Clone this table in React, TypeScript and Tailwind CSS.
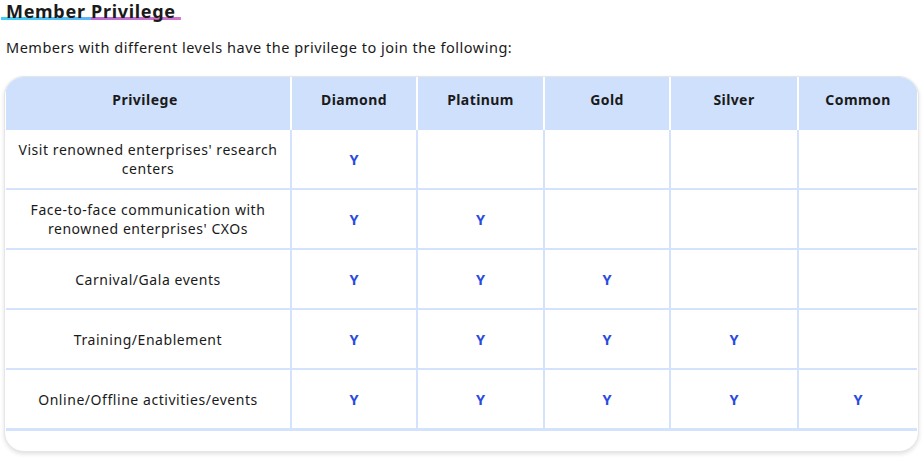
const levels = ["Diamond", "Platinum", "Gold", "Silver", "Common"];

const rows = [
  { name: "Visit renowned enterprises' research centers", count: 1 },
  { name: "Face-to-face communication with renowned enterprises' CXOs", count: 2 },
  { name: "Carnival/Gala events", count: 3 },
  { name: "Training/Enablement", count: 4 },
  { name: "Online/Offline activities/events", count: 5 },
];

const cols = "grid grid-cols-[284px_124px_125px_124px_126px_1fr] gap-x-[2px]";

export default function App() {
  return (
    <div className="min-h-screen bg-white pl-[4px] pr-[5px] text-[#1a1a1a]" style={{ fontFamily: '"Noto Sans", "Open Sans", sans-serif' }}>
      <h2 className="ml-[-3px] inline-block bg-[linear-gradient(90deg,#3fcff4_0%,#5cb6f8_50%,#b86ad4_50%,#cf74cb_100%)] bg-[length:100%_3px] bg-bottom bg-no-repeat px-[5px] text-[18px] font-bold leading-[17px] tracking-[0.7px]">
        Member Privilege
      </h2>

      <p className="mt-[14px] pl-[2px] text-[14.5px] leading-[18px] tracking-[0.5px]">
        Members with different levels have the privilege to join the following:
      </p>

      <div className="mt-[20px] overflow-hidden rounded-[20px] border border-[#e6e6e6] bg-white pb-[20px] pl-[1px] pr-[1px] shadow-[0_2px_4px_rgba(0,0,0,0.12)]">
        <div className={`${cols} bg-white`}>
          <div className="flex h-[53px] items-start justify-center bg-[#cfe0fd] pr-[6px] pt-[12px] text-[14px] font-bold tracking-[0.5px]">Privilege</div>
          {levels.map((l) => (
            <div key={l} className="flex h-[53px] items-start justify-center bg-[#cfe0fd] pt-[12px] text-[14px] font-bold tracking-[0.4px]">
              {l}
            </div>
          ))}
        </div>

        {rows.map((r, i) => (
          <div
            key={r.name}
            className={`${cols} bg-[#d3e2fd] ${i === rows.length - 1 ? "border-b-[3px]" : "border-b-2"} border-[#d3e2fd]`}
          >
            <div className="flex h-[58px] items-center justify-center bg-white px-3 text-center text-[14px] leading-[19px] tracking-[0.55px]">
              {r.name}
            </div>
            {levels.map((l, j) => (
              <div key={l} className="flex h-[58px] items-center justify-center bg-white pt-[2px] text-[14.5px] font-bold text-[#2b4be0]">
                {j < r.count ? "Y" : ""}
              </div>
            ))}
          </div>
        ))}
      </div>
    </div>
  );
}
